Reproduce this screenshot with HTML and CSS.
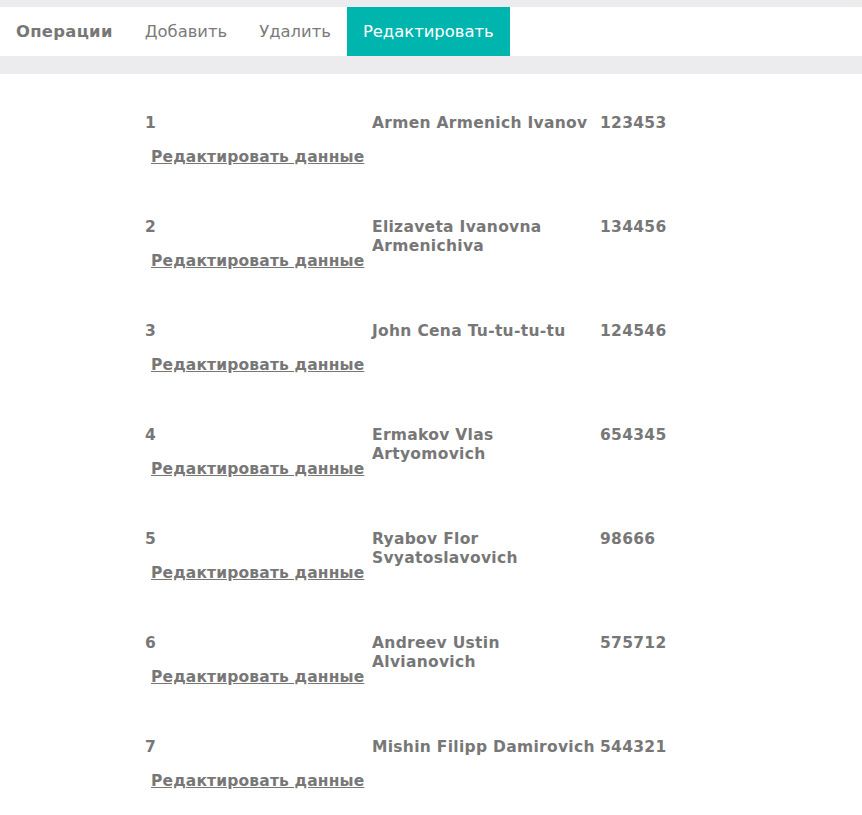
FILE: index.html
```html
<!DOCTYPE html>
<html lang="ru">
<head>
<meta charset="utf-8">
<title>Редактировать</title>
<link rel="stylesheet" href="styles.css">
</head>
<body>
<div class="topbar">
  <nav class="menu">
    <a class="menu-item menu-title" href="#">Операции</a>
    <a class="menu-item" href="#">Добавить</a>
    <a class="menu-item" href="#">Удалить</a>
    <a class="menu-item active" href="#">Редактировать</a>
  </nav>
</div>
<main class="list">
  <div class="entry">
    <div class="cell-id"><div class="num">1</div><a class="edit" href="#">Редактировать данные</a></div>
    <div class="name">Armen Armenich Ivanov</div>
    <div class="phone">123453</div>
  </div>
  <div class="entry">
    <div class="cell-id"><div class="num">2</div><a class="edit" href="#">Редактировать данные</a></div>
    <div class="name">Elizaveta Ivanovna<br>Armenichiva</div>
    <div class="phone">134456</div>
  </div>
  <div class="entry">
    <div class="cell-id"><div class="num">3</div><a class="edit" href="#">Редактировать данные</a></div>
    <div class="name">John Cena Tu-tu-tu-tu</div>
    <div class="phone">124546</div>
  </div>
  <div class="entry">
    <div class="cell-id"><div class="num">4</div><a class="edit" href="#">Редактировать данные</a></div>
    <div class="name">Ermakov Vlas<br>Artyomovich</div>
    <div class="phone">654345</div>
  </div>
  <div class="entry">
    <div class="cell-id"><div class="num">5</div><a class="edit" href="#">Редактировать данные</a></div>
    <div class="name">Ryabov Flor<br>Svyatoslavovich</div>
    <div class="phone">98666</div>
  </div>
  <div class="entry">
    <div class="cell-id"><div class="num">6</div><a class="edit" href="#">Редактировать данные</a></div>
    <div class="name">Andreev Ustin<br>Alvianovich</div>
    <div class="phone">575712</div>
  </div>
  <div class="entry">
    <div class="cell-id"><div class="num">7</div><a class="edit" href="#">Редактировать данные</a></div>
    <div class="name">Mishin Filipp Damirovich</div>
    <div class="phone">544321</div>
  </div>
</main>
</body>
</html>
```

FILE: styles.css
```css
html, body {
  margin: 0;
  padding: 0;
  background: #ffffff;
  font-family: Verdana, "DejaVu Sans", sans-serif;
  color: #777777;
}

.topbar {
  background: #ececee;
  padding: 7px 0 18px;
}

.menu {
  display: flex;
  background: #ffffff;
  height: 49px;
}

.menu-item {
  display: flex;
  align-items: center;
  padding: 0 16px;
  font-size: 16.4px;
  color: #7b7b7b;
  text-decoration: none;
}

.menu-title {
  font-weight: bold;
  letter-spacing: 0.3px;
  color: #777777;
}

.menu-item.active {
  background: #00b5ad;
  color: #ffffff;
}

.list {
  padding: 40px 0 0 145px;
}

.entry {
  display: grid;
  grid-template-columns: 227px 228px auto;
  height: 104px;
  font-size: 15.5px;
  font-weight: bold;
  line-height: 19px;
  letter-spacing: 0.3px;
}

.edit {
  display: block;
  margin: 15px 0 0 6px;
  color: #777777;
  text-decoration: underline;
  white-space: nowrap;
  letter-spacing: 0.15px;
}

.name {
  white-space: nowrap;
}
```
